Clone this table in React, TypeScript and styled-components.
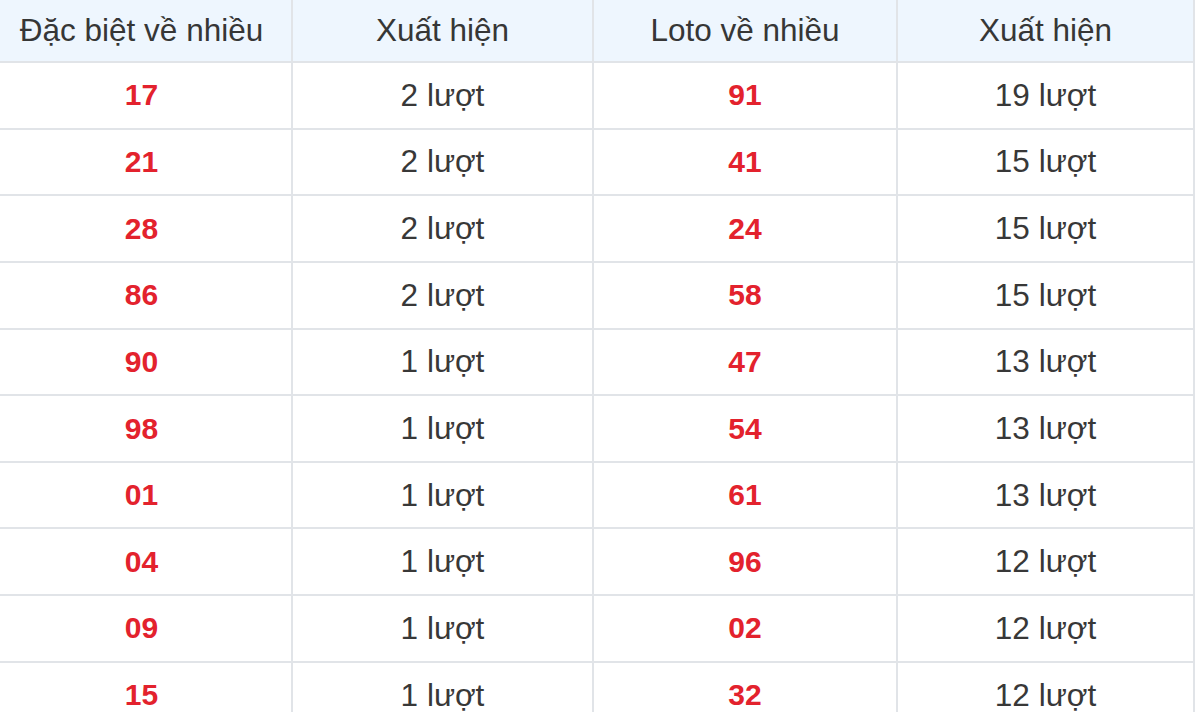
import React from "react";
import styled, { createGlobalStyle } from "styled-components";

const Global = createGlobalStyle`
  html, body { margin: 0; padding: 0; background: #fff; overflow: hidden; }
  body { font-family: "Liberation Sans", Arial, sans-serif; }
`;

const Wrap = styled.div`
  width: 1200px;
  height: 712px;
  overflow: hidden;
  background: #fff;
`;

const Table = styled.table`
  margin-left: -10px;
  width: 1203px;
  border-collapse: collapse;
  table-layout: fixed;
  font-family: "Liberation Sans", Arial, sans-serif;
`;

const HeadCell = styled.th`
  height: 61px;
  padding: 0;
  background: #eef6fe;
  color: #363636;
  font-size: 31.5px;
  font-weight: 400;
  text-align: center;
  border: 2px solid #e1e4e8;
  border-top: none;
`;

const Row = styled.tr`
  height: 66.65px;
`;

const Cell = styled.td<{ $hot?: boolean }>`
  padding: 0;
  text-align: center;
  border: 2px solid #e1e4e8;
  color: ${(p) => (p.$hot ? "#e3222d" : "#383838")};
  font-size: ${(p) => (p.$hot ? "30px" : "31.5px")};
  font-weight: ${(p) => (p.$hot ? 700 : 400)};
`;

const rows: [string, string, string, string][] = [
  ["17", "2 lượt", "91", "19 lượt"],
  ["21", "2 lượt", "41", "15 lượt"],
  ["28", "2 lượt", "24", "15 lượt"],
  ["86", "2 lượt", "58", "15 lượt"],
  ["90", "1 lượt", "47", "13 lượt"],
  ["98", "1 lượt", "54", "13 lượt"],
  ["01", "1 lượt", "61", "13 lượt"],
  ["04", "1 lượt", "96", "12 lượt"],
  ["09", "1 lượt", "02", "12 lượt"],
  ["15", "1 lượt", "32", "12 lượt"],
];

export default function App() {
  return (
    <Wrap>
      <Global />
      <Table>
        <colgroup>
          <col style={{ width: 301 }} />
          <col style={{ width: 301 }} />
          <col style={{ width: 304 }} />
          <col style={{ width: 297 }} />
        </colgroup>
        <thead>
          <tr>
            <HeadCell>Đặc biệt về nhiều</HeadCell>
            <HeadCell>Xuất hiện</HeadCell>
            <HeadCell>Loto về nhiều</HeadCell>
            <HeadCell>Xuất hiện</HeadCell>
          </tr>
        </thead>
        <tbody>
          {rows.map((r, i) => (
            <Row key={i}>
              <Cell $hot>{r[0]}</Cell>
              <Cell>{r[1]}</Cell>
              <Cell $hot>{r[2]}</Cell>
              <Cell>{r[3]}</Cell>
            </Row>
          ))}
        </tbody>
      </Table>
    </Wrap>
  );
}
